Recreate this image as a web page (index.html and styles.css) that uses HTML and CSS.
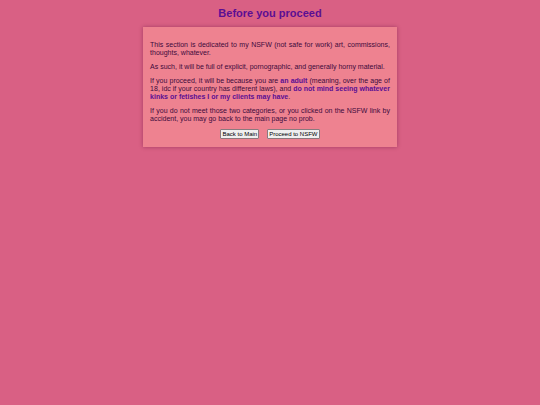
FILE: index.html
```
<!DOCTYPE html>
<html lang="en">
<head>
  <meta charset="utf-8">
  <title>Before you proceed</title>
  <link rel="stylesheet" href="styles.css">
</head>
<body>
  <h1>Before you proceed</h1>
  <div class="container">
    <p>This section is dedicated to my NSFW (not safe for work) art, commissions, thoughts, whatever.</p>
    <p>As such, it will be full of explicit, pornographic, and generally horny material.</p>
    <p>If you proceed, it will be because you are <b>an adult</b> (meaning, over the age of 18, idc if your country has different laws), and <b>do not mind seeing whatever kinks or fetishes I or my clients may have</b>.</p>
    <p>If you do not meet those two categories, or you clicked on the NSFW link by accident, you may go back to the main page no prob.</p>
    <div class="buttons">
      <button type="button">Back to Main</button>
      <button type="button">Proceed to NSFW</button>
    </div>
  </div>
</body>
</html>
```
FILE: styles.css
```
body {
  box-sizing: border-box;
  min-height: 100vh;
  margin: 0;
  padding-top: 7px;
  background: #d96084;
  color: #3d0a3c;
  font-family: Helvetica, Arial, "Liberation Sans", sans-serif;
  font-size: 7px;
  line-height: 8px;
}

h1 {
  margin: 0 0 7px;
  color: #5b0e93;
  font-size: 11px;
  line-height: 13px;
  text-align: center;
}

.container {
  box-sizing: border-box;
  width: 47%;
  margin: 0 auto;
  padding: 8px 7px;
  background: #ee8290;
  box-shadow: 0 0 4px rgba(80, 0, 50, 0.4);
  text-align: justify;
}

p {
  margin: 6px 0;
}

b {
  color: #5b0e93;
}

.buttons {
  display: flex;
  justify-content: center;
  gap: 8px;
}

button {
  padding: 0 1px;
  border: 1px solid #8a7a7e;
  border-radius: 1px;
  background: #efefef;
  color: #000;
  font-family: inherit;
  font-size: 6px;
  line-height: 8px;
}
```
